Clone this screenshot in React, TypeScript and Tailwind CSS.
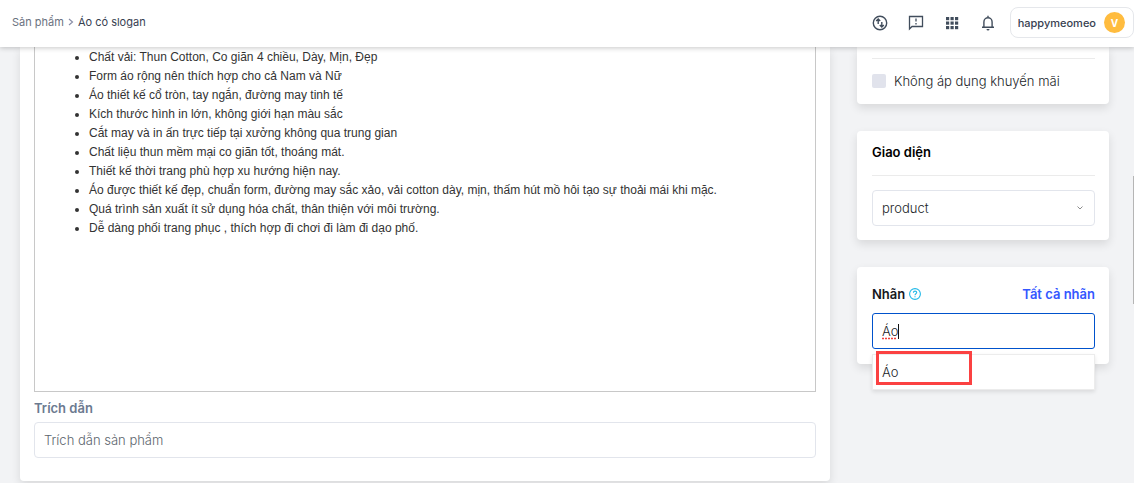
import React, { useState } from "react";

const features = [
  "Chất vải: Thun Cotton, Co giãn 4 chiều, Dày, Mịn, Đẹp",
  "Form áo rộng nên thích hợp cho cả Nam và Nữ",
  "Áo thiết kế cổ tròn, tay ngắn, đường may tinh tế",
  "Kích thước hình in lớn, không giới hạn màu sắc",
  "Cắt may và in ấn trực tiếp tại xưởng không qua trung gian",
  "Chất liệu thun mềm mại co giãn tốt, thoáng mát.",
  "Thiết kế thời trang phù hợp xu hướng hiện nay.",
  "Áo được thiết kế đẹp, chuẩn form, đường may sắc xảo, vải cotton dày, mịn, thấm hút mồ hôi tạo sự thoải mái khi mặc.",
  "Quá trình sản xuất ít sử dụng hóa chất, thân thiện với môi trường.",
  "Dễ dàng phối trang phục , thích hợp đi chơi đi làm đi dạo phố.",
];

const cardShadow = "shadow-[0_4px_10px_rgba(0,0,0,0.11)]";

function SwapIcon() {
  return (
    <svg viewBox="0 0 16 16" className="size-4" fill="none" stroke="currentColor" strokeWidth="1.4">
      <circle cx="8" cy="8" r="6.7" />
      <path d="M6.2 9V4.2M4.2 6 6.2 4l2 2M9.8 7v4.8M7.8 10l2 2 2-2" />
    </svg>
  );
}

function FeedbackIcon() {
  return (
    <svg viewBox="0 0 16 16" className="size-4" fill="none" stroke="currentColor" strokeWidth="1.3">
      <path d="M1.5 14V1.5h13v10H4L1.5 14Z" />
      <path d="M8 3.5v3M8 8v1.6" />
    </svg>
  );
}

function AppsIcon() {
  const steps = [2, 6.5, 11];
  return (
    <svg viewBox="0 0 16 16" className="size-4" fill="currentColor">
      {steps.map((y) => steps.map((x) => <rect key={`${x}-${y}`} x={x} y={y} width="3.2" height="3.2" />))}
    </svg>
  );
}

function BellIcon() {
  return (
    <svg viewBox="0 0 16 16" className="size-4" fill="none" stroke="currentColor" strokeWidth="1.4">
      <path d="M3.9 12V6.9a4.1 4.1 0 0 1 8.2 0V12M2 12.3h12M8 2.8V.8" />
      <path d="M6.5 14h3a1.5 1.5 0 0 1-3 0Z" fill="currentColor" stroke="none" />
    </svg>
  );
}

function Header() {
  return (
    <header className="relative z-10 flex h-[47px] items-center justify-between bg-white pl-3 shadow-[0_1px_5px_rgba(0,0,0,0.22)]">
      <nav aria-label="Breadcrumb" className="mb-1 flex items-center gap-1 text-[11px] leading-4">
        <a href="#products" className="text-[#6b7280]">
          Sản phẩm
        </a>
        <svg viewBox="0 0 6 8" className="h-2 w-1.5" fill="none" stroke="#8a8fa8" strokeWidth="1.2">
          <path d="m1 1 3.5 3L1 7" />
        </svg>
        <span className="text-[#374151]">Áo có slogan</span>
      </nav>
      <div className="flex items-center gap-5 pb-0.5 text-[#414d5c]">
        <button type="button" title="Chuyển đổi">
          <SwapIcon />
        </button>
        <button type="button" title="Góp ý">
          <FeedbackIcon />
        </button>
        <button type="button" title="Ứng dụng">
          <AppsIcon />
        </button>
        <button type="button" title="Thông báo">
          <BellIcon />
        </button>
        <button
          type="button"
          className="-ml-1.5 flex h-[31px] items-center gap-2 rounded-lg border border-[#e5e7eb] pr-2 pl-[7px] text-[11px] font-medium text-[#374151]"
        >
          happymeomeo
          <span className="flex size-[21px] items-center justify-center rounded-full bg-[#ffbc3f] text-[10px] font-bold text-white">
            V
          </span>
        </button>
      </div>
    </header>
  );
}

function TagField() {
  const [tag, setTag] = useState("Áo");

  return (
    <section className={`rounded bg-white pt-[17px] pr-3.5 pb-[15px] pl-[15px] ${cardShadow}`}>
      <div className="flex items-center justify-between">
        <div className="flex items-center gap-1">
          <label htmlFor="tag" className="font-semibold text-[#16181d]">
            Nhãn
          </label>
          <svg viewBox="0 0 12 12" className="size-3" fill="none" stroke="#22b9e8" strokeWidth="1.1">
            <circle cx="6" cy="6" r="5.4" />
            <path d="M4.4 4.8c0-2.3 3.3-2.2 3.3-.2C7.7 5.8 6 5.8 6 7.2M6 8.2v1.1" />
          </svg>
        </div>
        <a href="#tags" className="font-semibold text-[#3457ff]">
          Tất cả nhãn
        </a>
      </div>
      <div className="relative mt-[9px]">
        <input
          id="tag"
          type="text"
          value={tag}
          onChange={(e) => setTag(e.target.value)}
          spellCheck={false}
          className="h-9 w-full rounded-[3px] border border-[#0052cc] px-[9px] font-light text-[#212529] outline-none"
        />
        <svg viewBox="0 0 18 16" className="pointer-events-none absolute top-[11px] left-[10px] h-4 w-[18px]" fill="none">
          <path d="M0 14.5h15" stroke="#f0413c" strokeWidth="1.4" strokeDasharray="2 1" />
          <path d="M16.5 0v15" stroke="#111" />
        </svg>
        <ul className="absolute inset-x-0 top-full mt-[5px] border border-[#ececec] bg-white shadow-[0_2px_4px_rgba(0,0,0,0.1)]">
          <li>
            <button type="button" className="h-[34px] w-full px-[9px] text-left font-light text-[#212529]">
              Áo
            </button>
          </li>
        </ul>
        <div className="pointer-events-none absolute top-[38px] left-1 h-[34px] w-24 border-3 border-[#fb4141]" />
      </div>
    </section>
  );
}

export default function App() {
  return (
    <div className="relative min-h-screen bg-[#f2f3f5] font-['Inter','Noto_Sans',sans-serif] text-[13px] leading-5">
      <Header />
      <main className="flex items-start gap-[27px] pr-[25px] pb-[2px] pl-5">
        <section className={`min-w-0 flex-1 rounded-b bg-white px-3.5 pb-[23px] ${cardShadow}`}>
          <div className="min-h-[345px] border border-t-0 border-[#c8c8c8]">
            <ul className="list-disc pt-px pl-[54px] font-['Liberation_Sans',sans-serif] text-xs leading-[19px] text-[#333]">
              {features.map((feature) => (
                <li key={feature}>{feature}</li>
              ))}
            </ul>
          </div>
          <label htmlFor="excerpt" className="mt-1.5 mb-1 block font-semibold text-[#6b7a90]">
            Trích dẫn
          </label>
          <input
            id="excerpt"
            type="text"
            placeholder="Trích dẫn sản phẩm"
            className="h-9 w-full rounded border border-[#e2e5ec] px-[9px] font-light outline-none placeholder:text-[#5c656d]"
          />
        </section>

        <aside className="flex w-[252px] flex-col gap-[27px]">
          <section className={`rounded-b bg-white pt-[11px] pr-3.5 pb-[13px] pl-[15px] ${cardShadow}`}>
            <label className="flex items-center gap-2 border-t border-[#ebebeb] pt-3 font-light text-[#212529]">
              <input type="checkbox" className="size-3.5 appearance-none rounded-xs bg-[#e1e3ec] checked:bg-[#3457ff]" />
              Không áp dụng khuyến mãi
            </label>
          </section>

          <section className={`rounded bg-white pt-[11px] pr-3.5 pb-3.5 pl-[15px] ${cardShadow}`}>
            <h2 className="font-semibold text-black">
              <label htmlFor="template">Giao diện</label>
            </h2>
            <div className="relative mt-[13px] border-t border-[#ebebeb] pt-3.5">
              <select
                id="template"
                className="h-9 w-full appearance-none rounded border border-[#e2e5ec] px-[9px] font-light text-[#212529] outline-none"
              >
                <option>product</option>
              </select>
              <svg
                viewBox="0 0 6 4"
                className="pointer-events-none absolute right-3 bottom-4 h-1 w-1.5"
                fill="none"
                stroke="#8c8c8c"
              >
                <path d="M.5.5 3 3 5.5.5" />
              </svg>
            </div>
          </section>

          <TagField />
        </aside>
      </main>
      <div className="absolute top-44 right-0 h-32 w-px bg-[#b5b5b5]" />
    </div>
  );
}
